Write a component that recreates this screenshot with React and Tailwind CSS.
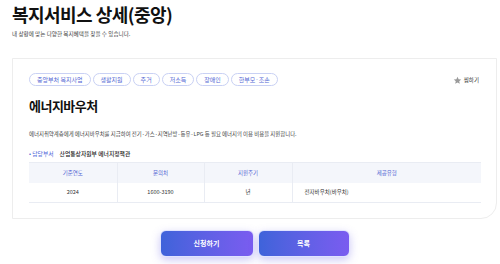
import React from "react";

const chips = ["중앙부처 복지사업", "생활지원", "주거", "저소득", "장애인", "한부모·조손"];

const App = () => {
  return (
    <div
      className="w-[500px] h-[264px] overflow-hidden bg-white text-[#222]"
      style={{ fontFamily: '"Noto Sans CJK KR", "Noto Sans", sans-serif' }}
    >
      <div className="pl-[12px] pr-[3px] pt-[3px]">
        {/* 제목 */}
        <h1 className="text-[18px] font-bold leading-[22px] tracking-[-0.03em] text-[#111]">
          복지서비스 상세(중앙)
        </h1>
        <p className="mt-[5px] text-[5.6px] leading-[8px] text-[#444]">
          내 상황에 맞는 다양한 복지혜택을 찾을 수 있습니다.
        </p>

        {/* 상세 카드 */}
        <div className="mt-[20px] border border-[#ededed] rounded-br-[16px] pl-[16px] pr-[16px] pt-[14px] pb-[15px]">
          <div className="flex items-center justify-between">
            <div className="flex gap-[2px]">
              {chips.map((c) => (
                <span
                  key={c}
                  className="h-[13px] px-[7px] flex items-center rounded-full border border-[#c9d1f4] text-[6px] text-[#5468d4]"
                >
                  {c}
                </span>
              ))}
            </div>
            <button className="flex items-center gap-[2px] mr-[1px] mt-[2px] text-[5.5px] text-[#333]">
              <svg width="9" height="9" viewBox="0 0 24 24" fill="#9a9a9a">
                <path d="M12 2l2.9 6.6 7.1.6-5.4 4.7 1.6 7-6.2-3.7-6.2 3.7 1.6-7L2 9.2l7.1-.6z" />
              </svg>
              찜하기
            </button>
          </div>

          <h2 className="mt-[12px] text-[13px] font-bold leading-[16px] tracking-[-0.04em] text-[#111]">
            에너지바우처
          </h2>

          <p className="mt-[16px] text-[5.4px] leading-[8px] text-[#444]">
            에너지취약계층에게 에너지바우처를 지급하여 전기·가스·지역난방·등유·LPG 등 필요 에너지의 이용 비용을 지원합니다.
          </p>

          <div className="mt-[12px] flex items-center gap-[6px] text-[5.8px] leading-[8px]">
            <span className="text-[#4a63d8]">• 담당부서</span>
            <span className="text-[#222] font-medium">산업통상자원부 에너지정책관</span>
          </div>

          <table className="mt-[4px] w-[452px] border-collapse text-[5.5px]">
            <thead>
              <tr className="h-[20px] bg-[#f4f6fb] text-[#5468d4]">
                <th className="w-[88px] font-normal border-t border-[#e9ecf3]">기준연도</th>
                <th className="w-[87px] font-normal border-t border-l border-[#e9ecf3]">문의처</th>
                <th className="w-[88px] font-normal border-t border-l border-[#e9ecf3]">지원주기</th>
                <th className="font-normal border-t border-l border-[#e9ecf3]">제공유형</th>
              </tr>
            </thead>
            <tbody>
              <tr className="h-[20px] text-[#333] border-b border-[#e9ecf3]">
                <td className="text-center">2024</td>
                <td className="text-center border-l border-[#e9ecf3]">1600-3190</td>
                <td className="text-center border-l border-[#e9ecf3]">년</td>
                <td className="pl-[12px] border-l border-[#e9ecf3]">전자바우처(바우처)</td>
              </tr>
            </tbody>
          </table>
        </div>

        {/* 버튼 */}
        <div className="mt-[11px] flex justify-center gap-[4px]">
          <button className="w-[94px] h-[27px] rounded-[6px] border border-[#dfe3ff] bg-gradient-to-r from-[#3e63da] to-[#7a5cf0] text-white text-[7px] font-bold shadow-[0_3px_8px_rgba(110,100,230,0.35)]">
            신청하기
          </button>
          <button className="w-[92px] h-[27px] rounded-[6px] border border-[#dfe3ff] bg-gradient-to-r from-[#3e63da] to-[#7a5cf0] text-white text-[7px] font-bold shadow-[0_3px_8px_rgba(110,100,230,0.35)]">
            목록
          </button>
        </div>
      </div>
    </div>
  );
};

export default App;
